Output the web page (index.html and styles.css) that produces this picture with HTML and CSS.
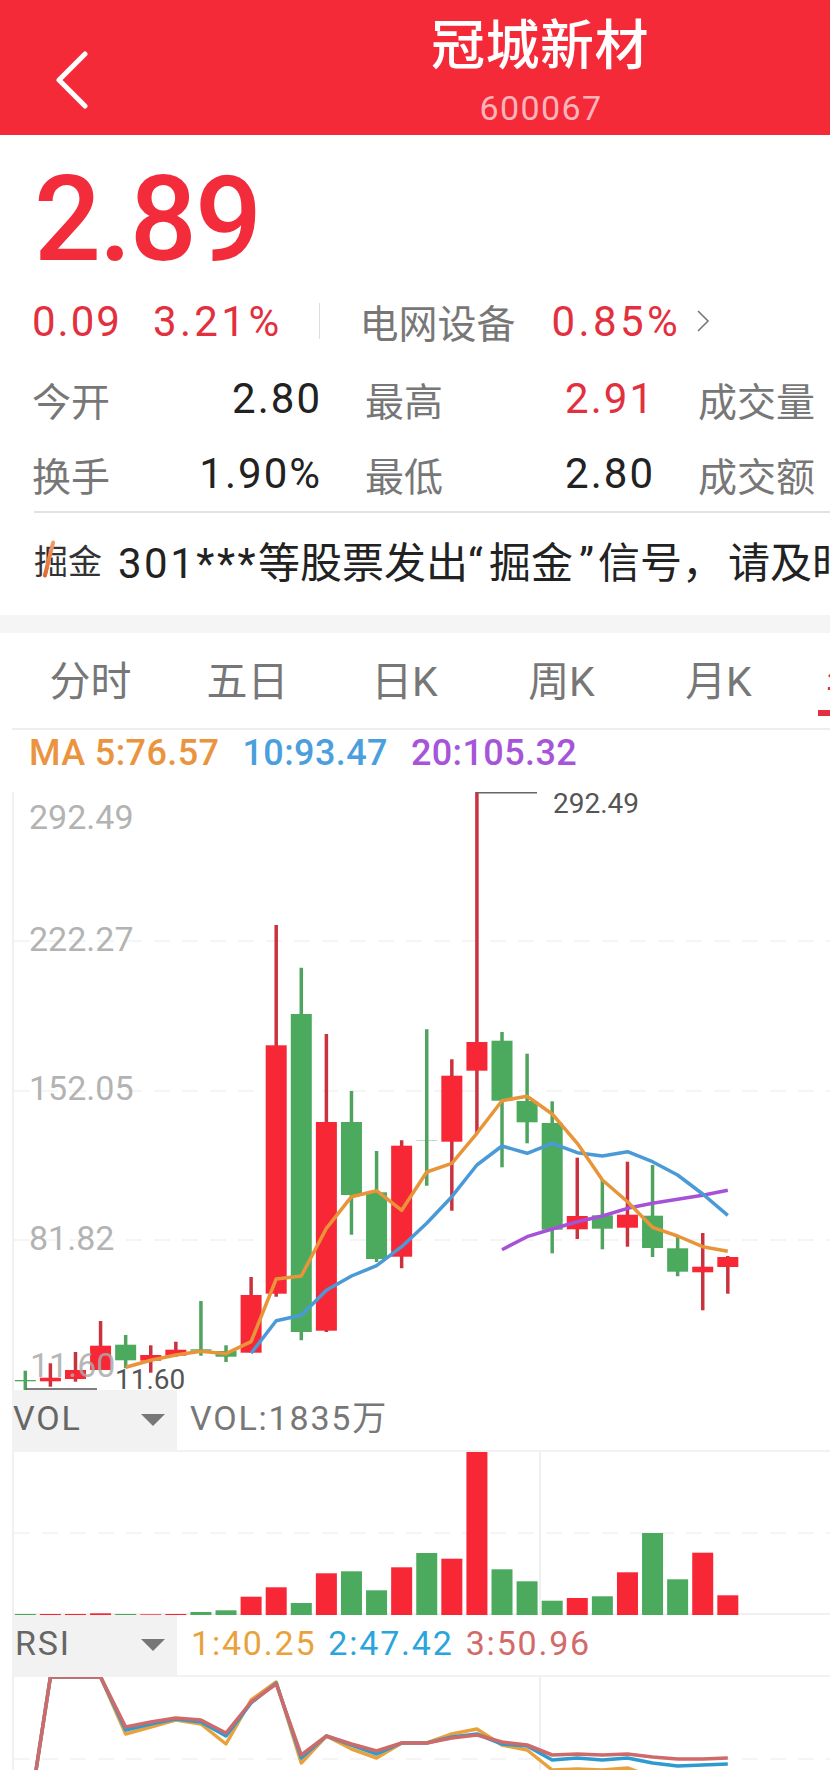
FILE: index.html
```html
<!DOCTYPE html>
<html lang="zh-CN">
  <head>
    <meta charset="UTF-8" />
    <meta name="viewport" content="width=device-width, initial-scale=1.0" />
    <title>冠城新材</title>
    <link rel="stylesheet" href="styles.css">
  </head>
  <body>
    <header class="top-bar">
      <svg class="back-icon" width="32" height="58" viewBox="0 0 32 58">
        <path d="M29 3 L3 29 L29 55" />
      </svg>
      <div class="stock-name">
        <h1>冠城新材</h1>
        <div class="stock-code">600067</div>
      </div>
    </header>

    <section class="quote">
      <div class="price">2.89</div>
      <div class="change-row">
        <span class="rise change-value">0.09</span>
        <span class="rise change-percent">3.21%</span>
        <span class="change-sep"></span>
        <span class="sector">电网设备</span>
        <span class="rise sector-percent">0.85%</span>
        <svg class="more-icon" width="14" height="24" viewBox="0 0 14 24">
          <path d="M2 2 L12 12 L2 22" />
        </svg>
      </div>
      <div class="stats">
        <div class="stat"><span class="stat-label">今开</span><span>2.80</span></div>
        <div class="stat"><span class="stat-label">最高</span><span class="rise">2.91</span></div>
        <div class="stat"><span class="stat-label">成交量</span></div>
        <div class="stat"><span class="stat-label">换手</span><span>1.90%</span></div>
        <div class="stat"><span class="stat-label">最低</span><span>2.80</span></div>
        <div class="stat"><span class="stat-label">成交额</span></div>
      </div>
      <div class="ticker">
        <span class="ticker-tag">掘金<i class="ticker-slash"></i></span>
        <span class="ticker-text"><span class="ticker-code">301***</span>等股票发出<span class="mark-open">“</span>掘金<span class="mark-close">”</span>信号<span class="ticker-comma">，</span>请及时</span>
      </div>
    </section>

    <div class="band"></div>

    <nav class="tabs">
      <span class="tab">分时</span>
      <span class="tab">五日</span>
      <span class="tab">日K</span>
      <span class="tab">周K</span>
      <span class="tab">月K</span>
      <span class="tab active">年K</span>
    </nav>

    <div class="ma-row">
      <span class="ma5">MA 5:76.57</span>
      <span class="ma10">10:93.47</span>
      <span class="ma20">20:105.32</span>
    </div>

    <svg class="chart chart-main" id="mainChart" width="830" height="598">
      <line class="axis" x1="13" y1="0" x2="13" y2="598" />
      <line class="grid" x1="14" y1="149" x2="830" y2="149" />
      <line class="grid" x1="14" y1="299" x2="830" y2="299" />
      <line class="grid" x1="14" y1="448" x2="830" y2="448" />
      <g id="candles"></g>
      <line class="peak-line" x1="477" y1="0.75" x2="537" y2="0.75" />
      <line class="low-line" x1="26" y1="597" x2="97" y2="597" />
      <text class="price-label" x="29" y="37">292.49</text>
      <text class="price-label" x="29" y="159">222.27</text>
      <text class="price-label" x="29" y="308">152.05</text>
      <text class="price-label" x="29" y="458">81.82</text>
      <text class="price-label faded" x="30" y="585">11.60</text>
      <text class="mark-label" x="553" y="21">292.49</text>
      <text class="mark-label" x="115" y="597">11.60</text>
    </svg>

    <div class="indicator-head">
      <div class="indicator-select">VOL<span class="caret"></span></div>
      <div class="indicator-values vol-value">VOL:1835万</div>
    </div>
    <svg class="chart chart-vol" id="volChart" width="830" height="163">
      <line class="axis" x1="13" y1="0" x2="13" y2="163" />
      <line class="axis" x1="540" y1="0" x2="540" y2="163" />
      <line class="grid" x1="14" y1="81" x2="830" y2="81" />
      <line class="axis" x1="13" y1="162" x2="830" y2="162" />
    </svg>

    <div class="indicator-head">
      <div class="indicator-select rsi-select">RSI<span class="caret"></span></div>
      <div class="indicator-values">
        <span class="rsi1">1:40.25</span>
        <span class="rsi2">2:47.42</span>
        <span class="rsi3">3:50.96</span>
      </div>
    </div>
    <svg class="chart chart-rsi" id="rsiChart" width="830" height="93">
      <line class="axis" x1="13" y1="0" x2="13" y2="93" />
      <line class="axis" x1="540" y1="0" x2="540" y2="93" />
      <line class="grid" x1="14" y1="82" x2="830" y2="82" />
    </svg>

    <script src="chart.js"></script>
  </body>
</html>
```

FILE: styles.css
```css
* {
  box-sizing: border-box;
}

html,
body {
  margin: 0;
  overflow: hidden;
}

body {
  width: 830px;
  height: 1770px;
  background-color: #fff;
  font-family: Roboto, "Noto Sans CJK SC", sans-serif;
  color: #222;
}

.top-bar {
  height: 135px;
  background-color: #f52a39;
  display: flex;
  padding-left: 56px;
}

.back-icon {
  margin-top: 51px;
  flex: none;
}

.back-icon path {
  fill: none;
  stroke: #fff;
  stroke-width: 5;
  stroke-linecap: round;
  stroke-linejoin: round;
}

.stock-name {
  width: 220px;
  margin-left: 342px;
  text-align: center;
  color: #fff;
}

.stock-name h1 {
  margin: 14px 0 0;
  font-size: 54px;
  font-weight: 500;
  line-height: 66px;
  letter-spacing: 0.5px;
}

.stock-code {
  margin-top: 8px;
  padding-left: 2px;
  font-size: 34px;
  line-height: 40px;
  letter-spacing: 1.4px;
  color: #fbb4ba;
}

.quote {
  height: 480px;
  overflow: hidden;
}

.rise {
  color: #e2303f;
}

.price {
  height: 166px;
  padding-left: 34px;
  font-size: 118px;
  font-weight: 500;
  line-height: 170px;
  letter-spacing: -2px;
  color: #f22c3b;
}

.change-row {
  height: 40px;
  display: flex;
  align-items: center;
  padding-left: 32px;
  font-size: 42px;
  letter-spacing: 2px;
}

.change-percent {
  margin-left: 31px;
  letter-spacing: 3.4px;
}

.change-sep {
  width: 1px;
  height: 36px;
  margin-left: 36px;
  background-color: #ddd;
}

.sector {
  margin-left: 40px;
  font-size: 39px;
  letter-spacing: 0;
  color: #777;
}

.sector-percent {
  margin-left: 36px;
  letter-spacing: 3.4px;
}

.more-icon {
  margin-left: 15px;
}

.more-icon path {
  fill: none;
  stroke: #777;
  stroke-width: 1.6;
}

.stats {
  display: grid;
  grid-template-columns: 290px 290px 290px;
  column-gap: 43px;
  grid-auto-rows: 75px;
  margin-top: 20px;
  padding-left: 32px;
  width: 960px;
  font-size: 42px;
  letter-spacing: 2px;
}

.stat {
  display: flex;
  justify-content: space-between;
  align-items: center;
}

.stat-label {
  font-size: 39px;
  letter-spacing: 0;
  color: #777;
}

.ticker {
  margin-left: 34px;
  height: 104px;
  padding-bottom: 10px;
  border-top: 2px solid #e2e2e2;
  display: flex;
  align-items: center;
  white-space: nowrap;
  font-size: 42px;
}

.ticker-tag {
  position: relative;
  font-size: 34px;
  color: #333;
}

.ticker-slash {
  position: absolute;
  left: 13px;
  top: 5px;
  width: 4px;
  height: 38px;
  border-radius: 2px;
  background: linear-gradient(#f0a070, #e8632a);
  transform: rotate(14deg);
}

.ticker-text {
  margin-left: 16px;
}

.ticker-code {
  letter-spacing: 2.5px;
}

.mark-open {
  padding: 0 6px 0 0;
}

.mark-close {
  padding: 0 4px 0 6px;
}

.ticker-comma {
  padding-right: 4px;
}

.band {
  height: 18px;
  background-color: #f5f5f5;
}

.tabs {
  height: 97px;
  margin-left: 12px;
  display: flex;
  border-bottom: 2px solid #eee;
  overflow: hidden;
  white-space: nowrap;
}

.tab {
  flex: none;
  width: 157px;
  height: 95px;
  padding-top: 19px;
  text-align: center;
  font-size: 41px;
  line-height: 60px;
  color: #777;
}

.tab.active {
  color: #e2303f;
  position: relative;
  text-align: left;
  padding-left: 29px;
}

.tab.active::after {
  content: "";
  position: absolute;
  left: 21px;
  bottom: 12px;
  width: 114px;
  height: 6px;
  background-color: #e2303f;
}

.ma-row {
  height: 62px;
  padding: 2px 0 0 29px;
  display: flex;
  gap: 23px;
  font-size: 36px;
  font-weight: 500;
  line-height: 42px;
  letter-spacing: 0.4px;
}

.ma5 {
  color: #ea9440;
}

.ma10 {
  color: #4b9fdc;
}

.ma20 {
  color: #a655d8;
}

.chart {
  display: block;
  overflow: hidden;
}

.axis {
  stroke: #f0f0f0;
  stroke-width: 2;
}

.grid {
  stroke: #f2f2f2;
  stroke-width: 1.5;
  stroke-dasharray: 16 12;
}

.peak-line {
  stroke: #666;
  stroke-width: 1.5;
}

.low-line {
  stroke: #555;
  stroke-width: 1.5;
}

.price-label {
  font-size: 34px;
  fill: #b3b3b3;
}

.price-label.faded {
  fill: rgba(170, 170, 170, 0.85);
}

.mark-label {
  font-size: 28px;
  fill: #555;
}

.wick {
  stroke-width: 3.5;
}

.wick.up {
  stroke: #c9323f;
}

.wick.down {
  stroke: #4fa35f;
}

.body.up {
  fill: #f72736;
}

.body.down {
  fill: #4caa5f;
}

.line {
  fill: none;
  stroke-width: 3.5;
  stroke-linejoin: round;
}

.line-ma5 {
  stroke: #e8953a;
}

.line-ma10 {
  stroke: #4a9ad8;
}

.line-ma20 {
  stroke: #a652d8;
}

.line-rsi1 {
  stroke: #e9a23b;
}

.line-rsi2 {
  stroke: #2e9bd0;
}

.line-rsi3 {
  stroke: #cf6a6a;
}

.indicator-head {
  height: 62px;
  display: flex;
  align-items: center;
  border-bottom: 2px solid #f2f2f2;
  margin-left: 12px;
  font-size: 34px;
  letter-spacing: 1.8px;
  color: #777;
  white-space: nowrap;
}

.indicator-select {
  position: relative;
  width: 165px;
  height: 60px;
  margin-right: 13px;
  padding-left: 1px;
  line-height: 56px;
  background-color: #f2f2f2;
  color: #666;
}

.rsi-select {
  padding-left: 3px;
}

.caret {
  position: absolute;
  right: 12px;
  top: 24px;
  border-left: 12px solid transparent;
  border-right: 12px solid transparent;
  border-top: 12px solid #777;
}

.indicator-values {
  display: flex;
  gap: 12px;
  line-height: 56px;
  height: 60px;
  margin-left: 1px;
}

.vol-value {
  margin-left: 0;
}

.rsi1 {
  color: #e9a23b;
}

.rsi2 {
  color: #2aa5dc;
}

.rsi3 {
  color: #d26a6a;
}
```

FILE: chart.js
```js
const SVG_NS = "http://www.w3.org/2000/svg";
const STEP = 25.09;
const FIRST_X = 25.3;
const BODY_WIDTH = 21;

// up, wick top, wick bottom, body top, body bottom (px inside the main chart)
const candles = [
  [0, 578.7, 598, 588, 589.3],
  [1, 571.3, 594.7, 585.7, 589.3],
  [1, 560, 589.7, 578, 587],
  [1, 529, 578, 553.7, 578],
  [0, 543, 576.3, 552.7, 568.3],
  [1, 553.3, 580.7, 563, 568.7],
  [1, 549.7, 564.7, 557.7, 563.7],
  [0, 509, 563.7, 557.3, 558.7],
  [0, 553.3, 570, 559, 564.7],
  [1, 485, 560.7, 503, 560.7],
  [1, 133, 504.7, 253.3, 501.7],
  [0, 175.7, 548.3, 222, 540],
  [1, 242, 540, 330, 538.7],
  [0, 299, 442.7, 330, 403],
  [0, 359, 470, 400.3, 467],
  [1, 348.3, 476.3, 353.7, 464.7],
  [0, 237.3, 393.7, 348, 348.4],
  [1, 267.3, 418.7, 283.7, 349.7],
  [1, 0, 341.3, 250, 278.7],
  [0, 240, 375.3, 248.7, 308.7],
  [0, 261.7, 351.3, 309, 330.3],
  [0, 309.3, 461.3, 331, 437.7],
  [1, 365.7, 447, 424, 437.3],
  [0, 388, 457.3, 423.3, 436.7],
  [1, 369.7, 454.7, 422.7, 435.7],
  [0, 373, 465, 423.7, 456],
  [0, 444.7, 484.3, 456.3, 479.7],
  [1, 441, 518.3, 474.7, 480.3],
  [1, 464, 501.7, 465, 475],
];

const ma5 = [575.3, 568.3, 563, 559.3, 561.7, 549.7, 487, 484, 436.3, 404.7, 398.7, 418.3,
  380, 371.3, 341.3, 308.7, 304.3, 322, 351.3, 388, 409.7, 435.3, 444, 454.7, 459.3];
const ma10 = [561.3, 528.7, 523.3, 498.3, 484, 473.7, 454.7, 431.3, 404.7, 373, 354, 361.3,
  351.3, 360.7, 364, 359.7, 369.7, 383, 402, 423.3];
const ma20 = [457.7, 444.7, 437, 429.7, 424, 416.3, 411.3, 407.3, 403.3, 398.3];

const volumes = [1, 1, 1, 1.7, 1, 0.7, 1, 3, 4.7, 18.3, 27.7, 12, 41.7, 43.7, 24.7, 47.7, 62,
  56.3, 163, 45.7, 33.7, 14.3, 17, 18.7, 42.7, 82, 35.7, 62.3, 19.7];

const rsi1 = [162.7, 0, 0, 0, 57, 50, 43, 47, 67, 23, 5, 86, 59, 72, 81, 66, 66, 57, 52, 68,
  73, 93, 92, 93, 91, 100, 103, 102, 100];
const rsi2 = [162.7, 0, 0, 0, 53, 47, 42, 45, 59, 26, 6, 81, 59, 68, 77, 66, 66, 60, 57, 67,
  69, 83, 81, 83, 81, 86, 89, 88, 87];
const rsi3 = [162.7, 0, 0, 0, 50, 45, 41, 43, 56, 25, 7, 78, 59, 67, 74, 66, 66, 61, 58, 65,
  68, 78, 77, 78, 77, 80, 82, 82, 81];

function xAt(i) {
  return FIRST_X + STEP * i;
}

function add(parent, tag, attrs) {
  const el = document.createElementNS(SVG_NS, tag);
  for (const name in attrs) {
    el.setAttribute(name, attrs[name]);
  }
  parent.appendChild(el);
  return el;
}

function drawLine(parent, values, startIndex, className) {
  const points = values.map((y, i) => xAt(startIndex + i).toFixed(1) + "," + y).join(" ");
  add(parent, "polyline", { class: "line " + className, points: points });
}

const candleGroup = document.getElementById("candles");
candles.forEach((c, i) => {
  const side = c[0] ? "up" : "down";
  const x = xAt(i);
  add(candleGroup, "line", { class: "wick " + side, x1: x, x2: x, y1: c[1], y2: c[2] });
  add(candleGroup, "rect", {
    class: "body " + side,
    x: x - BODY_WIDTH / 2,
    y: c[3],
    width: BODY_WIDTH,
    height: c[4] - c[3],
  });
});
drawLine(candleGroup, ma20, 19, "line-ma20");
drawLine(candleGroup, ma10, 9, "line-ma10");
drawLine(candleGroup, ma5, 4, "line-ma5");

const volChart = document.getElementById("volChart");
volumes.forEach((h, i) => {
  add(volChart, "rect", {
    class: "body " + (candles[i][0] ? "up" : "down"),
    x: xAt(i) - BODY_WIDTH / 2,
    y: 163 - h,
    width: BODY_WIDTH,
    height: h,
  });
});

const rsiChart = document.getElementById("rsiChart");
drawLine(rsiChart, rsi1, 0, "line-rsi1");
drawLine(rsiChart, rsi2, 0, "line-rsi2");
drawLine(rsiChart, rsi3, 0, "line-rsi3");
```
